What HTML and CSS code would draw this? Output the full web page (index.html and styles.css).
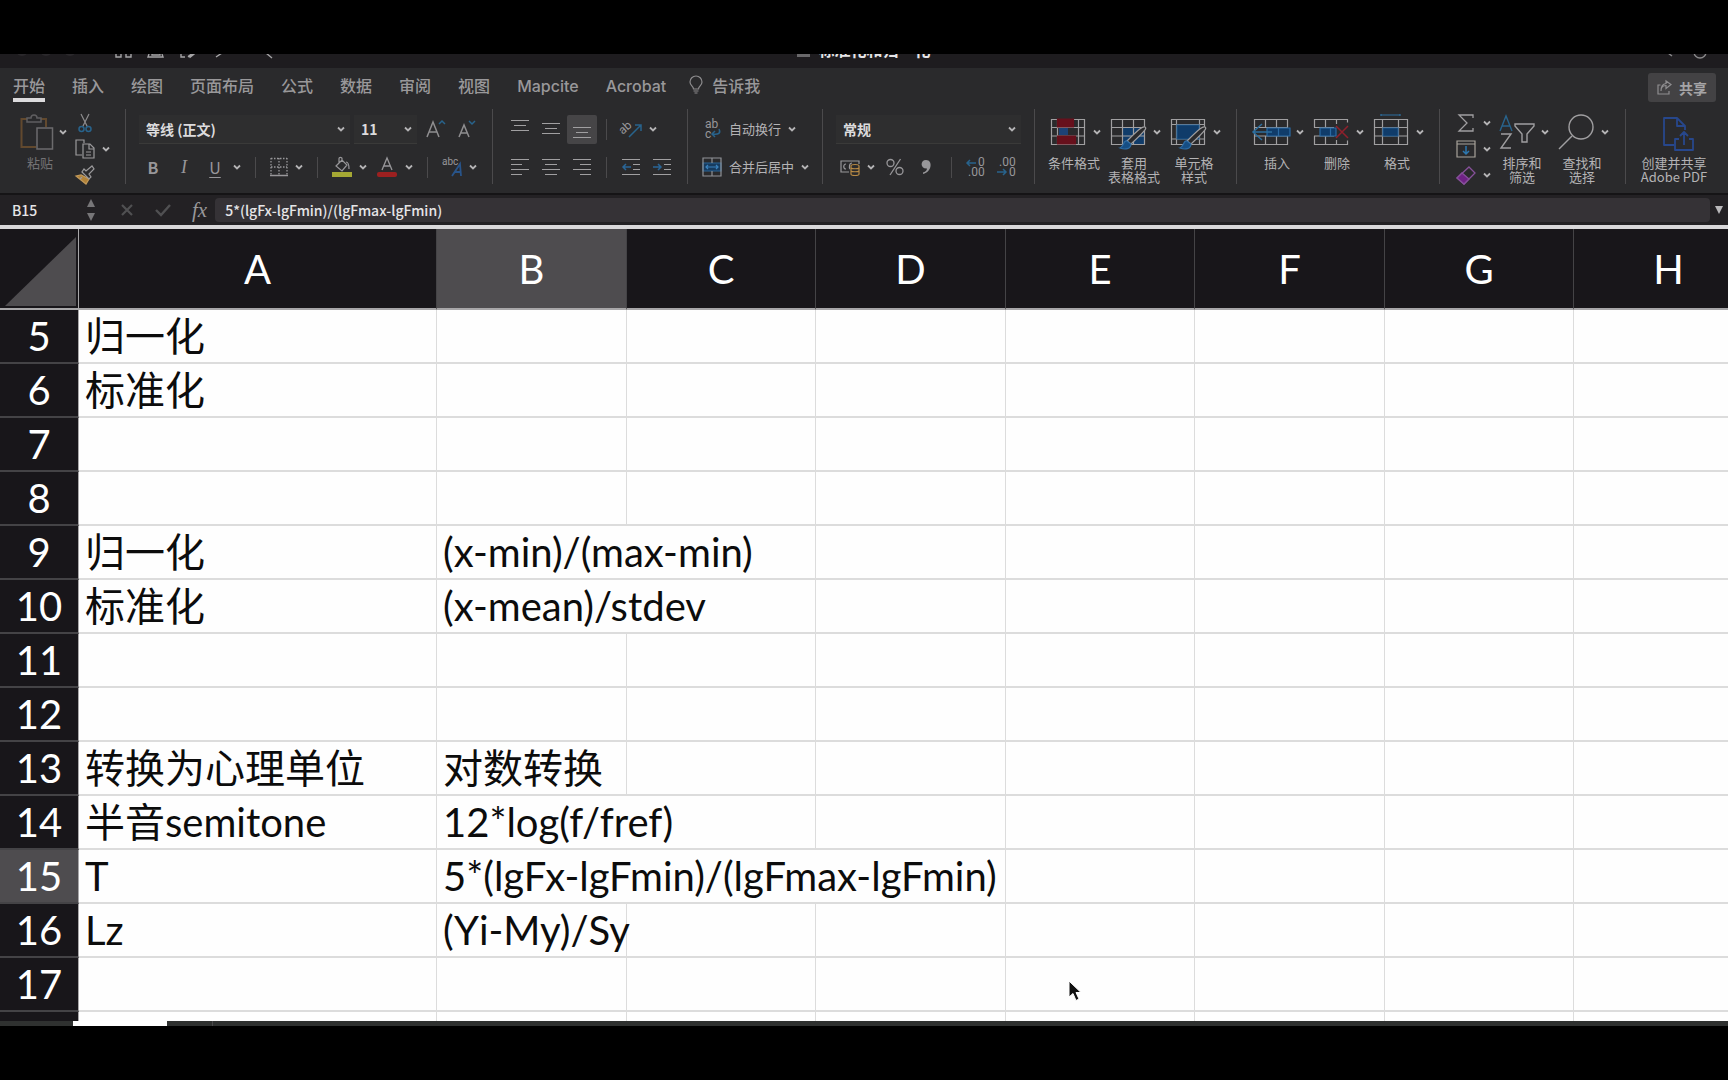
FILE: index.html
```html
<!DOCTYPE html>
<html lang="zh-CN">
<head>
<meta charset="utf-8">
<title>标准化和归一化</title>
<link rel="stylesheet" href="styles.css">
</head>
<body>
<svg class="defs" aria-hidden="true">
  <symbol id="chev" viewBox="0 0 8 8"><path d="M1 2.5 4 5.5 7 2.5" fill="none" stroke="#b4b3b5" stroke-width="1.8"/></symbol>
</svg>
<div class="app">
  <header class="titlebar">
    <svg class="quick" width="290" height="14" viewBox="0 0 290 14" fill="none" stroke="#a5a4a6" stroke-width="1.4" aria-hidden="true">
      <g stroke="none" fill="#2b292c"><circle cx="22" cy="-4" r="6"/><circle cx="46" cy="-4" r="6"/><circle cx="70" cy="-4" r="6"/></g>
      <path d="M116 0v3h5V0M126 0v3h5V0M149 0l-1 3h15l-1-3M152 0v1h8V0M181 0v3h4M188 3l4-3M216 3l6-4M266-1l6 5"/>
      <path d="m189 3 5-4" stroke-width="3"/>
    </svg>
    <h1><svg width="13" height="18" viewBox="0 0 13 18" aria-hidden="true"><path d="M0 0h13v17H0z" fill="#69686a"/></svg>标准化和归一化</h1>
    <svg class="corner" width="60" height="14" viewBox="0 0 60 14" fill="none" stroke="#8b8a8c" stroke-width="1.4" aria-hidden="true"><path d="m0-1 4 3"/><circle cx="32" cy="-2" r="6"/></svg>
  </header>

  <nav class="tabs">
    <a href="#" class="on">开始</a><a href="#">插入</a><a href="#">绘图</a><a href="#">页面布局</a><a href="#">公式</a><a href="#">数据</a><a href="#">审阅</a><a href="#">视图</a><a href="#" class="latin">Mapcite</a><a href="#" class="latin">Acrobat</a>
    <a href="#" class="tell"><svg width="14" height="18" viewBox="0 0 14 18" fill="none" stroke="#8d8c8e" stroke-width="1.2"><path d="M4.5 13c0-3-3.500-3.500-3.500-7a6 6 0 0 1 12 0c0 3.500-3.500 4-3.500 7zM4.500 15h5M5.500 17h3"/></svg>告诉我</a>
    <button class="share"><svg width="15" height="15" viewBox="0 0 15 15" fill="none" stroke="#8f8e90" stroke-width="1.200"><path d="M3.500 5H1v9h11v-3M4 11c0-4 2-5.500 5-5.500V8.500L14 4.500 9 1v2.500C5 4 4 7 4 11z"/></svg>共享</button>
  </nav>

  <div class="ribbon">
    <section class="group clip">
      <button class="big paste" aria-label="粘贴">
        <span class="pic"><svg width="34" height="36" viewBox="0 0 34 36" fill="none" stroke-width="1.500"><path d="M7 5H1.500v28H16M21 5h5v8" stroke="#62492e" stroke-width="2"/><path d="M7 8V4h4c0-4 6-4 6 0h4v4z" stroke="#5f5e60"/><path d="M17 14h15.500v21H17z" stroke="#6c6b6d"/></svg><svg class="chev"><use href="#chev"/></svg></span>
        <span class="cap">粘贴</span>
      </button>
      <div class="stack">
        <button class="split" aria-label="剪切"><svg width="20" height="20" viewBox="0 0 20 20" fill="none"><path d="m6 1 6.500 13M14 1 7.500 14" stroke="#8d8c8e" stroke-width="1.200"/><g stroke="#28638c" stroke-width="1.500"><circle cx="6.500" cy="16" r="2.500"/><circle cx="13.500" cy="16" r="2.500"/></g></svg></button>
        <button class="split" aria-label="复制"><svg width="20" height="20" viewBox="0 0 20 20" fill="none" stroke="#9b9a9c" stroke-width="1.200"><path d="M7 16H1V1h8v3M8 5h7l4 4v10H8zM14 5v5h5M11 13h5M11 16h5"/></svg><svg class="chev"><use href="#chev"/></svg></button>
        <button class="split" aria-label="格式刷"><svg width="20" height="20" viewBox="0 0 20 20" fill="none" stroke="#9b9a9c" stroke-width="1.200"><path d="m1 11 10 8 3-5-8-4z" fill="#b18238" stroke="#c39a5a"/><path d="m7 7 7 7 2-2-2-3 5-5-2-3-6 5-2-2zM5 14l2-2"/></svg></button>
      </div>
    </section>

    <section class="group font">
      <div class="row">
        <label class="combo wide"><select aria-label="字体"><option>等线 (正文)</option></select><svg class="chev"><use href="#chev"/></svg></label>
        <label class="combo size"><select aria-label="字号"><option>11</option></select><svg class="chev"><use href="#chev"/></svg></label>
        <button class="bigA" aria-label="增大字号"><svg width="20" height="20" viewBox="0 0 20 20" fill="none"><path d="M1 18 7 3l6 15M3 13h8" stroke="#8f8e90" stroke-width="1.500"/><path d="m13 5 3-3 3 3" stroke="#28638c" stroke-width="1.500"/></svg></button>
        <button aria-label="减小字号"><svg width="20" height="20" viewBox="0 0 20 20" fill="none"><path d="M1 18 6 6l5 12M3 14h6" stroke="#8f8e90" stroke-width="1.500"/><path d="m11 2 3 3 3-3" stroke="#28638c" stroke-width="1.500"/></svg></button>
      </div>
      <div class="row tools">
        <button class="letter b">B</button><button class="letter i">I</button>
        <button class="split u"><span class="letter">U</span><svg class="chev"><use href="#chev"/></svg></button>
        <i class="sep"></i>
        <button class="split" aria-label="边框"><svg width="18" height="20" viewBox="0 0 18 20" fill="none" stroke="#98979a" stroke-width="1.300"><path d="M1 1.500h16M1 10h16M1 1v17M9 1v17M17 1v17" stroke-dasharray="1.500 1.500"/><path d="M0 18.500h18" stroke-width="1.500"/></svg><svg class="chev"><use href="#chev"/></svg></button>
        <i class="sep"></i>
        <button class="split" aria-label="填充颜色"><svg width="20" height="20" viewBox="0 0 20 20" fill="none" stroke="#98979a" stroke-width="1.200"><path d="m4 9 6-6 5 5-5 6zM10 5V1.500C10 0 7 0 7 1.500V6M14 5c2 0 3 2 3 7"/><path d="M0 15h20v5H0z" fill="#a5a834" stroke="none"/></svg><svg class="chev"><use href="#chev"/></svg></button>
        <button class="split" aria-label="字体颜色"><svg width="22" height="20" viewBox="0 0 22 20" fill="none"><path d="m6 13 5-12 5 12M7.500 9h7" stroke="#98979a" stroke-width="1.300"/><rect x="1" y="15" width="20" height="5" rx="2" fill="#9c2020"/></svg><svg class="chev"><use href="#chev"/></svg></button>
        <i class="sep"></i>
        <button class="split" aria-label="拼音"><svg width="20" height="20" viewBox="0 0 20 20"><text x="0" y="8" class="tiny">abc</text><path d="m10 19 8-12 1 12M13 15h6" fill="none" stroke="#28548a" stroke-width="1.800"/></svg><svg class="chev"><use href="#chev"/></svg></button>
      </div>
    </section>

    <section class="group align">
      <div class="row">
        <button aria-label="顶端对齐"><svg width="18" height="20" viewBox="0 0 18 20" stroke="#a09fa1" stroke-width="1.200"><path d="M0 1.500h18M3 6.500h12M0 11.500h18"/></svg></button>
        <button aria-label="垂直居中"><svg width="18" height="20" viewBox="0 0 18 20" stroke="#a09fa1" stroke-width="1.200"><path d="M0 4.500h18M3 9.500h12M0 14.500h18"/></svg></button>
        <button class="pressed" aria-label="底端对齐"><svg width="18" height="20" viewBox="0 0 18 20" stroke="#a09fa1" stroke-width="1.200"><path d="M0 8.500h18M3 13.500h12M0 18.500h18"/></svg></button>
        <i class="sep"></i>
        <button class="split" aria-label="方向"><svg width="20" height="20" viewBox="0 0 20 20" fill="none"><text x="0" y="14" transform="rotate(-42 3 14)" class="mid">ab</text><path d="M7 18 19 6M13 6h6v6" stroke="#28638c" stroke-width="1.500"/></svg><svg class="chev"><use href="#chev"/></svg></button>
      </div>
      <div class="row">
        <button aria-label="左对齐"><svg width="18" height="20" viewBox="0 0 18 20" stroke="#a09fa1" stroke-width="1.200"><path d="M0 2.500h18M0 7.500h11M0 12.500h18M0 17.500h11"/></svg></button>
        <button aria-label="居中"><svg width="18" height="20" viewBox="0 0 18 20" stroke="#a09fa1" stroke-width="1.200"><path d="M0 2.500h18M3 7.500h12M0 12.500h18M3 17.500h12"/></svg></button>
        <button aria-label="右对齐"><svg width="18" height="20" viewBox="0 0 18 20" stroke="#a09fa1" stroke-width="1.200"><path d="M0 2.500h18M7 7.500h11M0 12.500h18M7 17.500h11"/></svg></button>
        <i class="sep"></i>
        <button aria-label="减少缩进"><svg width="18" height="20" viewBox="0 0 18 20" fill="none" stroke="#a09fa1" stroke-width="1.200"><path d="M0 2.500h18M11 7.500h7M11 12.500h7M0 17.500h18"/><path d="M9 10H1M4 7l-3 3 3 3" stroke="#2a6596" stroke-width="1.500"/></svg></button>
        <button aria-label="增加缩进"><svg width="18" height="20" viewBox="0 0 18 20" fill="none" stroke="#a09fa1" stroke-width="1.200"><path d="M0 2.500h18M11 7.500h7M11 12.500h7M0 17.500h18"/><path d="M0 10h8M5 7l3 3-3 3" stroke="#2a6596" stroke-width="1.500"/></svg></button>
      </div>
    </section>

    <section class="group wrap">
      <div class="row"><button class="split"><svg width="20" height="20" viewBox="0 0 20 20" fill="none"><text x="3" y="9" class="mid">ab</text><text x="3" y="19" class="mid">c</text><path d="M17 10c2 4 0 6-7 5M13 12l-3 3 3 3" stroke="#28638c" stroke-width="1.500"/></svg><span>自动换行</span><svg class="chev"><use href="#chev"/></svg></button></div>
      <div class="row"><button class="split"><svg width="20" height="20" viewBox="0 0 20 20" fill="none" stroke="#8f9297" stroke-width="1.200"><path d="M1 6h18v8H1z" fill="#173b5e" stroke="#2a6596"/><path d="M1 1h18v18H1zM10 1v5M10 14v5"/><path d="M4 10h12M6 8l-2 2 2 2M14 8l2 2-2 2" stroke="#3b82bd"/></svg><span>合并后居中</span><svg class="chev"><use href="#chev"/></svg></button></div>
    </section>

    <section class="group number">
      <div class="row"><label class="combo"><select aria-label="数字格式"><option>常规</option></select><svg class="chev"><use href="#chev"/></svg></label></div>
      <div class="row tools">
        <button class="split" aria-label="会计格式"><svg width="20" height="20" viewBox="0 0 20 20" fill="none" stroke="#98979a" stroke-width="1.200"><path d="M9 15H1V4h18v3M6 7c-3 0-3 5 0 5M12 6c-3 0-3 5-2 6"/><path d="M11 9c0-2 8-2 8 0v8c0 2-8 2-8 0zM11 11c1 1 7 1 8 0M11 14c1 1 7 1 8 0" stroke="#b88a45" fill="#2a2a2c"/></svg><svg class="chev"><use href="#chev"/></svg></button>
        <button aria-label="百分比"><svg width="18" height="20" viewBox="0 0 18 20" fill="none" stroke="#98979a" stroke-width="1.300"><circle cx="4.500" cy="6" r="3.500"/><circle cx="13.500" cy="14" r="3.500"/><path d="M14.500 2 4 18"/></svg></button>
        <button aria-label="千位分隔"><svg width="22" height="20" viewBox="0 0 22 20"><path d="M11 3c7 0 6 12-3 14v-1.500c3-1 4-2.500 4-4C5 12 5 3 11 3z" fill="#98979a"/></svg></button>
        <i class="sep"></i>
        <button aria-label="增加小数位"><svg width="20" height="20" viewBox="0 0 20 20" fill="none"><text x="12" y="9" class="mid">0</text><text x="2" y="19" class="mid">.00</text><path d="M10 6H1M4 3 1 6l3 3" stroke="#28638c" stroke-width="1.500"/></svg></button>
        <button aria-label="减少小数位"><svg width="20" height="20" viewBox="0 0 20 20" fill="none"><text x="2" y="9" class="mid">.00</text><text x="12" y="19" class="mid">0</text><path d="M0 15h9M6 12l3 3-3 3" stroke="#28638c" stroke-width="1.500"/></svg></button>
      </div>
    </section>

    <section class="group styles">
      <button class="big"><span class="pic"><svg width="38" height="36" viewBox="0 0 38 36" fill="none" stroke="#a09fa1" stroke-width="1.200"><path d="M2.500 5.500h33v25h-33zM2 13.500h33M2 22h33M8.500 5v25M29.500 5v25"/><path d="M8.500 5h16v8h-16zM8.500 22h18v8h-18z" fill="#67101c" stroke="#67101c"/><path d="M10 14h9v7h-9z" fill="#1c4276" stroke="none"/></svg><svg class="chev"><use href="#chev"/></svg></span><span class="cap">条件格式</span></button>
      <button class="big"><span class="pic"><svg width="38" height="36" viewBox="0 0 38 36" fill="none" stroke="#a09fa1" stroke-width="1.200"><path d="M14 13h21v17H14z" fill="#103c6a" stroke="none"/><path d="M2.500 5.500h33v25h-33zM2 13.500h33M2 22h33M13.500 5v25M24.500 5v25"/><path d="M36 13c2 1 1 3-14 17l-4-3c13-13 16-15 18-14z" fill="#2a2a2c"/><path d="M18 27c-4-1-3 6-7 7 5 2 11 1 11-4z" fill="#164e84" stroke="#2d6ba3"/></svg><svg class="chev"><use href="#chev"/></svg></span><span class="cap">套用<br>表格格式</span></button>
      <button class="big"><span class="pic"><svg width="38" height="36" viewBox="0 0 38 36" fill="none" stroke="#a09fa1" stroke-width="1.200"><path d="M2.500 5.500h33v25h-33zM2 10.500h33M2 25h33M7.500 5v25M30.500 5v25"/><path d="M8 11h22v14H8z" fill="#103c6a" stroke="#1b568c"/><path d="M36 13c2 1 1 3-14 17l-4-3c13-13 16-15 18-14z" fill="#2a2a2c"/><path d="M18 27c-4-1-3 6-7 7 5 2 11 1 11-4z" fill="#164e84" stroke="#2d6ba3"/></svg><svg class="chev"><use href="#chev"/></svg></span><span class="cap">单元格<br>样式</span></button>
    </section>

    <section class="group cells">
      <button class="big"><span class="pic"><svg width="38" height="36" viewBox="0 0 38 36" fill="none" stroke="#a09fa1" stroke-width="1.200"><path d="M2.500 5.500h33v25h-33zM13.500 5v8M24.500 5v8M13.500 22v8M24.500 22v8M2 13.500h33M2 22h33"/><path d="M15 14h23v8H15zM26.500 14v8" fill="#103c6a" stroke="#2a6aa3"/><path d="M20 18H2M10 10l-9 8 9 8" stroke="#2d6f9f" stroke-width="1.500"/></svg><svg class="chev"><use href="#chev"/></svg></span><span class="cap">插入</span></button>
      <button class="big"><span class="pic"><svg width="38" height="36" viewBox="0 0 38 36" fill="none" stroke="#a09fa1" stroke-width="1.200"><path d="M2.500 13.500v-8h33v3M2.500 22v8.500h33v-4M13.500 5v8M24.500 5v5M13.500 22v8M24.500 26v4M2 13.500h20M2 22h20"/><path d="M8 14h16v8H8zM18.500 14v8" fill="#103c6a" stroke="#2a6aa3"/><path d="m24 12 12 12M36 12 24 24" stroke="#90202c" stroke-width="1.500"/></svg><svg class="chev"><use href="#chev"/></svg></span><span class="cap">删除</span></button>
      <button class="big"><span class="pic"><svg width="38" height="36" viewBox="0 0 38 36" fill="none" stroke="#a09fa1" stroke-width="1.200"><path d="M2.500 5.500h33v25h-33zM2 13.500h33M2 22h33M10.500 5v25M26.500 5v25"/><path d="M11 14h15v8H11z" fill="#103c6a" stroke="#1b568c"/><path d="M9 1h19M9 0v2M28 0v2" stroke="#2d6f9f"/></svg><svg class="chev"><use href="#chev"/></svg></span><span class="cap">格式</span></button>
    </section>

    <section class="group edit">
      <div class="stack">
        <button class="split" aria-label="自动求和"><svg width="20" height="20" viewBox="0 0 20 20" fill="none" stroke="#a09fa1" stroke-width="1.300"><path d="M17 5V2H3l8 8-8 8h14v-3"/></svg><svg class="chev"><use href="#chev"/></svg></button>
        <button class="split" aria-label="填充"><svg width="20" height="20" viewBox="0 0 20 20" fill="none" stroke="#a8a39b" stroke-width="1.200"><path d="M1 2h18v16H1zM1 5h18"/><path d="M10 7v8M7 12l3 3 3-3" stroke="#2d78b0" stroke-width="1.500"/></svg><svg class="chev"><use href="#chev"/></svg></button>
        <button class="split" aria-label="清除"><svg width="20" height="20" viewBox="0 0 20 20" fill="none" stroke="#86509a" stroke-width="1.300"><path d="M13 2 19 8 8 19 1 13z"/><path d="m6 8 7 6-5 5-7-6z" fill="#6f2285"/></svg><svg class="chev"><use href="#chev"/></svg></button>
      </div>
      <button class="big"><span class="pic"><svg width="38" height="36" viewBox="0 0 38 36" fill="none" stroke-width="1.400"><path d="m3 17 6-15 6 15M5 12h8" stroke="#28638c"/><path d="M4 20h10L4 34h10" stroke="#a09fa1"/><path d="M18 10h19v2l-7 8v8h-5v-8l-7-8z" stroke="#a09fa1"/></svg><svg class="chev"><use href="#chev"/></svg></span><span class="cap">排序和<br>筛选</span></button>
      <button class="big"><span class="pic"><svg width="38" height="36" viewBox="0 0 38 36" fill="none" stroke="#a09fa1" stroke-width="1.400"><circle cx="24" cy="13" r="12"/><path d="M15 22 2 35"/></svg><svg class="chev"><use href="#chev"/></svg></span><span class="cap">查找和<br>选择</span></button>
    </section>

    <section class="group adobe">
      <button class="big"><span class="pic"><svg width="38" height="36" viewBox="0 0 38 36" fill="none" stroke="#27478c" stroke-width="1.800" stroke-linejoin="round"><path d="M15 31H5V4h13l8 8v4M18 4v8h8"/><path d="M20 25h-4v11h18V25h-4M25 31V18M21 22l4-4 4 4"/></svg></span><span class="cap">创建并共享<br>Adobe PDF</span></button>
    </section>
  </div>

  <div class="fbar">
    <input class="name" aria-label="名称框" value="B15">
    <svg class="spin" width="10" height="24" viewBox="0 0 10 24" fill="#777678" aria-hidden="true"><path d="m5 1 4 8H1zM5 23l4-8H1z"/></svg>
    <button aria-label="取消"><svg width="14" height="14" viewBox="0 0 14 14" fill="none" stroke="#505052" stroke-width="2.200"><path d="m2 2 10 10M12 2 2 12"/></svg></button>
    <button aria-label="输入"><svg width="18" height="14" viewBox="0 0 18 14" fill="none" stroke="#505052" stroke-width="2.400"><path d="m2 7 5 5L16 2"/></svg></button>
    <button class="fx">fx</button>
    <input class="formula" aria-label="编辑栏" value="5*(lgFx-lgFmin)/(lgFmax-lgFmin)">
    <button class="expand" aria-label="展开编辑栏"><svg width="10" height="8" viewBox="0 0 10 8"><path d="M1 0h8L5 8z" fill="#b9b8ba"/></svg></button>
  </div>

  <main class="sheet">
    <table>
      <colgroup><col class="c-num"><col class="c-a"><col class="c-x"><col class="c-y"><col class="c-x"><col class="c-y"><col class="c-x"><col class="c-y"><col class="c-x"></colgroup>
      <thead><tr><th class="all"><svg width="72" height="70" viewBox="0 0 72 70" aria-label="全选"><path d="M71 1v69H0z" fill="#4e4c4f"/></svg></th><th>A</th><th class="sel">B</th><th>C</th><th>D</th><th>E</th><th>F</th><th>G</th><th>H</th></tr></thead>
      <tbody>
        <tr><th>5</th><td>归一化</td><td></td><td></td><td></td><td></td><td></td><td></td><td></td></tr>
        <tr><th>6</th><td>标准化</td><td></td><td></td><td></td><td></td><td></td><td></td><td></td></tr>
        <tr><th>7</th><td></td><td></td><td></td><td></td><td></td><td></td><td></td><td></td></tr>
        <tr><th>8</th><td></td><td></td><td></td><td></td><td></td><td></td><td></td><td></td></tr>
        <tr><th>9</th><td>归一化</td><td colspan="2">(x-min)/(max-min)</td><td></td><td></td><td></td><td></td><td></td></tr>
        <tr><th>10</th><td>标准化</td><td colspan="2">(x-mean)/stdev</td><td></td><td></td><td></td><td></td><td></td></tr>
        <tr><th>11</th><td></td><td></td><td></td><td></td><td></td><td></td><td></td><td></td></tr>
        <tr><th>12</th><td></td><td></td><td></td><td></td><td></td><td></td><td></td><td></td></tr>
        <tr><th>13</th><td>转换为心理单位</td><td>对数转换</td><td></td><td></td><td></td><td></td><td></td><td></td></tr>
        <tr><th>14</th><td>半音semitone</td><td colspan="2">12*log(f/fref)</td><td></td><td></td><td></td><td></td><td></td></tr>
        <tr><th class="sel">15</th><td>T</td><td colspan="3">5*(lgFx-lgFmin)/(lgFmax-lgFmin)</td><td></td><td></td><td></td><td></td></tr>
        <tr><th>16</th><td>Lz</td><td>(Yi-My)/Sy</td><td></td><td></td><td></td><td></td><td></td><td></td></tr>
        <tr><th>17</th><td></td><td></td><td></td><td></td><td></td><td></td><td></td><td></td></tr>
        <tr><th></th><td></td><td></td><td></td><td></td><td></td><td></td><td></td><td></td></tr>
      </tbody>
    </table>
    <svg class="cursor" width="14" height="22" viewBox="0 0 14 22" aria-hidden="true"><path d="M1 1v16l4-3.500 3 7 3-1.500-3-6.500h5z" fill="#111" stroke="#fff" stroke-width="1"/></svg>
  </main>
  <footer class="sheettabs"><span class="tab"></span><span class="tab2"></span></footer>
</div>
</body>
</html>
```
FILE: styles.css
```css
* { box-sizing: border-box; }
body {
  margin: 0;
  background: #000;
  color: #b4b3b5;
  font-family: "Noto Sans CJK SC", "Noto Sans", sans-serif;
  font-size: 13px;
}
.defs { position: absolute; width: 0; height: 0; }
svg { display: block; flex: none; overflow: visible; }
button, input, select {
  appearance: none;
  border: 0;
  padding: 0;
  margin: 0;
  background: none;
  color: inherit;
  font: inherit;
}
.app {
  display: flex;
  flex-direction: column;
  height: 100vh;
  padding: 54px 0;
  overflow: hidden;
}

/* title bar */
.titlebar {
  display: grid;
  grid-template-columns: 1fr auto 1fr;
  height: 14px;
  overflow: hidden;
  background: #1e1c1f;
}
.titlebar h1 {
  display: flex;
  align-items: center;
  gap: 8px;
  height: 18px;
  margin: -14px 0 0;
  font-size: 16px;
  line-height: 18px;
  color: #e6e5e7;
}
.corner { justify-self: end; }

/* ribbon tabs */
.tabs {
  display: flex;
  align-items: flex-start;
  gap: 27px;
  height: 41px;
  padding: 5px 12px 0 13px;
  background: #2a2a2c;
  font-size: 16px;
  font-weight: 500;
  line-height: 24px;
}
.tabs a {
  color: #99989a;
  text-decoration: none;
  border-bottom: 4px solid transparent;
  padding-bottom: 1px;
}
.tabs .on { border-color: #dcdbdd; }
.tabs .latin { font-family: Inter, "Liberation Sans", sans-serif; line-height: 26px; }
.tabs .tell { display: flex; align-items: center; gap: 9px; margin-left: -4px; }
.share {
  display: flex;
  align-items: center;
  justify-content: center;
  gap: 7px;
  width: 68px;
  height: 29px;
  margin-left: auto;
  border-radius: 3px;
  background: #434244;
  color: #a5a4a6;
  font-size: 14px;
  font-weight: 700;
}

/* ribbon */
.ribbon {
  display: grid;
  grid-template-columns: 126px 367px 195px 135px 212px 202px 203px 186px 1fr;
  padding-bottom: 9px;
  background: #2a2a2c;
  border-bottom: 2px solid #151416;
}
.group { height: 75px; border-right: 1px solid #4b4a4c; }
.group.adobe { border-right: 0; }
.row { display: flex; align-items: center; height: 30px; margin-top: 8px; }
.row:first-child { margin-top: 5px; }
.split { display: flex; align-items: center; gap: 7px; }
.chev { width: 8px; height: 8px; }
.sep { width: 1px; height: 21px; background: #4b4a4c; }

.clip, .styles, .cells, .edit, .adobe { display: flex; align-items: flex-start; }
.clip { padding-left: 20px; gap: 8px; }
.styles { padding-left: 9px; }
.cells { padding-left: 10px; }
.edit { padding-left: 16px; gap: 0; }
.edit .stack { margin-right: 1px; }
.adobe { padding-left: 18px; }

.stack { display: flex; flex-direction: column; gap: 6px; padding-top: 4px; }
.big { display: flex; flex-direction: column; align-items: center; gap: 6px; width: 60px; padding-top: 5px; }
.pic { display: flex; align-items: center; gap: 6px; width: 52px; margin-left: 2px; }
.cap { font-size: 13px; line-height: 14px; white-space: nowrap; }
.paste { width: 47px; color: #737274; align-items: stretch; }
.paste .pic { width: 47px; gap: 5px; margin: 0; }
.paste .cap { width: 40px; }
.adobe .pic { width: 38px; margin-left: 8px; }

.font { padding-left: 13px; }
.combo {
  display: flex;
  align-items: center;
  width: 185px;
  height: 29px;
  padding: 0 5px 0 7px;
  background: #2e2e2f;
  border-bottom: 1px solid #3a3a39;
}
.combo select { flex: 1; min-width: 0; font-size: 14px; font-weight: 700; line-height: 20px; color: #dcdbdd; }
.combo.wide { width: 211px; }
.combo.size { width: 63px; margin: 0 9px 0 4px; }
.bigA { margin-right: 12px; }
.font .tools { gap: 9px; padding-left: 3px; }
.font .sep { margin: 0 5px; }
.letter { width: 22px; font-size: 16px; line-height: 20px; text-align: center; color: #98979a; }
.b { font-weight: 700; }
.i { font-family: "Liberation Serif", serif; font-style: italic; font-size: 18px; }
.u .letter { text-decoration: underline; text-underline-offset: 3px; }
.tiny, .mid { font-family: Roboto, sans-serif; fill: #98979a; }
.tiny { font-size: 10px; }
.mid { font-size: 12px; }

.align { padding-left: 18px; }
.align .row { gap: 13px; }
.align .sep { margin: 0 2px; }
.pressed {
  display: flex;
  align-items: center;
  justify-content: center;
  width: 30px;
  height: 29px;
  margin: 0 -6px;
  border-radius: 2px;
  background: #464547;
}
.wrap { padding-left: 14px; }
.wrap .split { line-height: 18px; }
.number { padding-left: 13px; }
.number .tools { gap: 11px; padding-left: 4px; }
.number .sep { margin: 0 3px; }

/* formula bar */
.fbar {
  display: flex;
  align-items: center;
  height: 30px;
  padding-right: 4px;
  background: #232124;
}
.fbar input { color: #e6e5e7; font-weight: 500; line-height: 20px; }
.name { width: 86px; padding-left: 12px; font-size: 14px; }
.spin { margin-right: 5px; }
.fbar button { margin-left: 19px; }
.fbar button + button { margin-left: 20px; }
.fbar .fx { font-family: "Liberation Serif", serif; font-style: italic; font-size: 21px; line-height: 24px; color: #98979a; }
.formula {
  flex: 1;
  height: 24px;
  margin-left: 8px;
  padding-left: 10px;
  border-radius: 4px;
  background: #353236;
  font-size: 14px;
}
.fbar .expand { margin-left: 4px; }

/* sheet */
.sheet {
  position: relative;
  flex: 1;
  min-height: 0;
  overflow: hidden;
  background: #fefefe;
  border-top: 4px solid #d9d8da;
}
table { width: 1763px; table-layout: fixed; border-collapse: separate; border-spacing: 0; }
.c-num { width: 79px; }
.c-a { width: 358px; }
.c-x { width: 190px; }
.c-y { width: 189px; }
th, td {
  height: 54px;
  padding: 0;
  border: 0 solid #dcdcdc;
  border-width: 0 1px 2px 0;
  font-family: Lato, "Noto Sans CJK SC", sans-serif;
  font-size: 40px;
  font-weight: 400;
  line-height: 52px;
  white-space: nowrap;
}
td { padding-left: 6px; text-align: left; color: #0c0c0c; }
th { background: #18161a; color: #fff; border-color: #444346; }
tbody th { border-right-color: #a8a7a9; }
thead th { height: 81px; border-bottom-color: #a8a7a9; }
th.sel { background: #4e4c4f; }
.all { padding: 5px 0 0 5px; border-right-color: #a8a7a9; }
.cursor { position: absolute; left: 1068px; top: 751px; }

.sheettabs { display: flex; height: 5px; background: #2f3130; }
.tab { width: 94px; margin-left: 73px; background: #fff; }
.tab2 { width: 46px; border-right: 1px solid #4b4a4c; }
```
